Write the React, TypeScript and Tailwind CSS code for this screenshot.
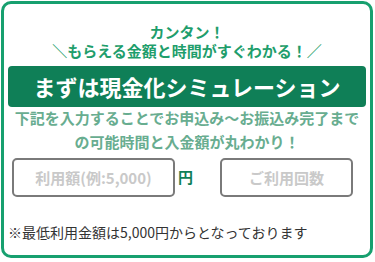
export default function App() {
  return (
    <div className="w-[375px] h-[262px] bg-white p-[1px] font-['Noto_Sans_CJK_JP','Noto_Sans',sans-serif]">
      <div className="h-[257px] w-[372px] rounded-[10px] border-[3px] border-[#17a06f] px-[4px] pt-[18px]">
        <p className="text-center text-[15px] font-bold leading-[19px] text-[#1f9e6c]">カンタン！</p>
        <p className="text-center text-[15px] font-bold leading-[19px] text-[#1f9e6c]">＼もらえる金額と時間がすぐわかる！／</p>
        <div className="mt-[6px] flex h-[41px] items-center justify-center rounded-[4px] bg-[#0f7f57] text-[22px] font-bold text-white">
          まずは現金化シミュレーション
        </div>
        <p className="mt-[-1px] text-center text-[15px] font-bold leading-[24px] text-[#68ad90]">
          下記を入力することでお申込み～お振込み完了まで
          <br />
          の可能時間と入金額が丸わかり！
        </p>
        <div className="mt-[4px] flex items-center px-[4px]">
          <input
            placeholder="利用額(例:5,000)"
            className="h-[39px] w-[163px] rounded-[5px] border-2 border-[#7a7a7a] text-center text-[15px] font-bold outline-none placeholder:text-[#c9c9c9]"
          />
          <span className="ml-[3px] text-[15px] font-bold text-[#0f7f57]">円</span>
          <input
            placeholder="ご利用回数"
            className="ml-[27px] h-[39px] w-[133px] rounded-[5px] border-2 border-[#7a7a7a] text-center text-[15px] font-bold outline-none placeholder:text-[#c9c9c9]"
          />
        </div>
        <p className="mt-[26px] text-[14px] leading-[18px] text-[#333]">※最低利用金額は5,000円からとなっております</p>
      </div>
    </div>
  );
}
